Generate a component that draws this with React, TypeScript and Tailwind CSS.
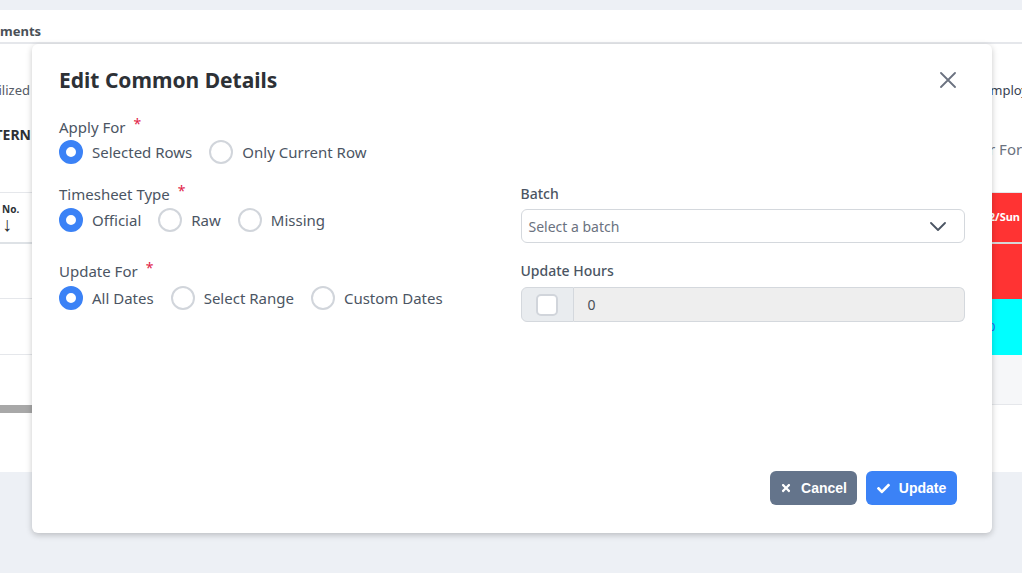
import React from "react";
import { FaTimes, FaCheck } from "react-icons/fa";

function Radio({ checked, label }: { checked?: boolean; label: string }) {
  return (
    <label className="flex items-center">
      <span
        className={
          checked
            ? "block w-[24px] h-[24px] rounded-full border-[7px] border-[#3b82f6] bg-white"
            : "block w-[24px] h-[24px] rounded-full border-2 border-[#d1d5db] bg-white"
        }
      />
      <span className="ml-[9px] text-[15px] leading-[20px] text-[#4b5563]">{label}</span>
    </label>
  );
}

function Label({ text, required }: { text: string; required?: boolean }) {
  return (
    <div className="flex items-start text-[15px] leading-[20px] text-[#4b5563]">
      <span>{text}</span>
      {required && <span className="ml-[8px] text-[#e11d48] text-[14px] leading-[14px]">*</span>}
    </div>
  );
}

export default function App() {
  return (
    <div
      className="relative w-[1022px] h-[573px] overflow-hidden bg-[#edf0f5]"
      style={{ fontFamily: '"Noto Sans", "Open Sans", sans-serif' }}
    >
      <div className="h-[10px]" />
      {/* background page panel */}
      <div className="h-[462px] bg-white flex flex-col">
        <div className="h-[34px] shrink-0 border-b-2 border-[#e5e7eb] flex items-end pb-[1px]">
          <span className="text-[13px] font-bold text-[#495057] leading-[18px] pb-[1px]">ments</span>
        </div>
        <div className="h-[36px] shrink-0" />
        <div className="h-[20px] shrink-0 flex items-center justify-between">
          <div className="w-[30px] overflow-hidden flex justify-end">
            <span className="text-[13px] text-[#555b66] whitespace-nowrap leading-[20px]">Stabilized</span>
          </div>
          <div className="w-[36px] overflow-hidden">
            <span className="text-[13px] text-[#374151] whitespace-nowrap leading-[20px] -ml-[3px] block">Employee</span>
          </div>
        </div>
        <div className="h-[25px] shrink-0" />
        <div className="h-[48px] shrink-0 flex items-start justify-between">
          <div className="w-[31px] overflow-hidden flex justify-end">
            <span className="text-[14px] font-bold text-[#2d3136] whitespace-nowrap leading-[20px]">PATTERN</span>
          </div>
          <div className="w-[36px] overflow-hidden pt-[12px] pl-[3px]">
            <span className="text-[15px] text-[#6b7280] whitespace-nowrap leading-[20px]">r Form</span>
          </div>
        </div>
        <div className="h-[19px] shrink-0" />
        {/* table */}
        <div className="flex justify-between border-t border-[#e5e7eb] shrink-0">
          <div className="w-[32px] flex flex-col">
            <div className="h-[51px] border-b-2 border-[#dee2e6] flex flex-col pl-[2px] pt-[10px]">
              <span className="text-[10px] font-bold text-[#2d3136] leading-[12px]">No.</span>
              <span className="text-[20px] leading-[16px] text-[#2d3136] mt-[1px]">↓</span>
            </div>
            <div className="h-[55px] border-b border-[#e5e7eb]" />
            <div className="h-[56px] border-b border-[#e5e7eb]" />
            <div className="h-[50px]" />
            <div className="h-[8px] bg-[#a8a8a8]" />
          </div>
          <div className="w-[40px] flex flex-col">
            <div className="h-[51px] bg-[#ff3333] border-b-2 border-[#d6d6d6] flex items-center justify-end pr-[2px]">
              <span className="text-[11px] font-bold text-white whitespace-nowrap">12/Sun</span>
            </div>
            <div className="h-[55px] bg-[#ff3333]" />
            <div className="h-[56px] bg-[#00ffff] flex items-center pl-[7px]">
              <span className="text-[11px] text-[#2563eb]">0</span>
            </div>
            <div className="h-[50px] bg-[#f6f7f9] border-b border-[#e5e7eb]" />
          </div>
        </div>
      </div>

      {/* modal */}
      <div className="absolute left-[32px] top-[44px] w-[960px] h-[489px] bg-white rounded-[6px] shadow-[0_2px_6px_rgba(0,0,0,0.22)] flex flex-col">
        <div className="flex items-center justify-between pl-[27px] pr-[36px] pt-[22px]">
          <h2 className="text-[21px] leading-[28px] font-bold text-[#2d3136]">Edit Common Details</h2>
          <svg width="16" height="16" viewBox="0 0 16 16">
            <path d="M1 1 L15 15 M15 1 L1 15" stroke="#6b7280" strokeWidth="1.8" strokeLinecap="round" />
          </svg>
        </div>

        <div className="px-[27px] pt-[23px] grid grid-cols-2 gap-x-[17px]">
          <div className="col-span-2">
            <Label text="Apply For" required />
            <div className="flex items-center gap-[17px] mt-[3px]">
              <Radio checked label="Selected Rows" />
              <Radio label="Only Current Row" />
            </div>
          </div>

          <div className="mt-[20px]">
            <Label text="Timesheet Type" required />
            <div className="flex items-center gap-[17px] mt-[4px]">
              <Radio checked label="Official" />
              <Radio label="Raw" />
              <Radio label="Missing" />
            </div>
          </div>
          <div className="mt-[20px]">
            <div className="text-[14px] leading-[20px] font-medium text-[#4b5563]">Batch</div>
            <div className="mt-[5px] h-[34px] rounded-[6px] border border-[#d4d8dd] flex items-center justify-between pl-[7px] pr-[18px]">
              <span className="text-[14px] text-[#6b7280]">Select a batch</span>
              <svg width="16" height="9" viewBox="0 0 16 9">
                <path d="M1 1 L8 8 L15 1" stroke="#4b5563" strokeWidth="1.8" fill="none" strokeLinecap="round" strokeLinejoin="round" />
              </svg>
            </div>
          </div>

          <div className="mt-[18px]">
            <Label text="Update For" required />
            <div className="flex items-center gap-[17px] mt-[5px]">
              <Radio checked label="All Dates" />
              <Radio label="Select Range" />
              <Radio label="Custom Dates" />
            </div>
          </div>
          <div className="mt-[18px]">
            <div className="text-[14px] leading-[20px] font-medium text-[#4b5563]">Update Hours</div>
            <div className="mt-[6px] h-[35px] flex">
              <div className="w-[53px] bg-[#e9ecef] border border-[#d4d8dd] rounded-l-[6px] flex items-center justify-center">
                <span className="block w-[22px] h-[22px] bg-white border-2 border-[#d1d5db] rounded-[5px]" />
              </div>
              <div className="flex-1 bg-[#eeeeee] border border-l-0 border-[#d4d8dd] rounded-r-[6px] flex items-center pl-[14px]">
                <span className="text-[14px] text-[#495057]">0</span>
              </div>
            </div>
          </div>
        </div>

        <div className="flex-1" />
        <div className="flex justify-end gap-[9px] pr-[35px] pb-[28px]" style={{ fontFamily: '"Liberation Sans", Arial, sans-serif' }}>
          <button className="h-[34px] w-[87px] rounded-[6px] bg-[#64748b] text-white font-bold text-[14px] flex items-center justify-center gap-[9px]">
            <FaTimes size={12} />
            <span>Cancel</span>
          </button>
          <button className="h-[34px] w-[91px] rounded-[6px] bg-[#3b82f6] text-white font-bold text-[14px] flex items-center justify-center gap-[9px]">
            <FaCheck size={13} />
            <span>Update</span>
          </button>
        </div>
      </div>
    </div>
  );
}
